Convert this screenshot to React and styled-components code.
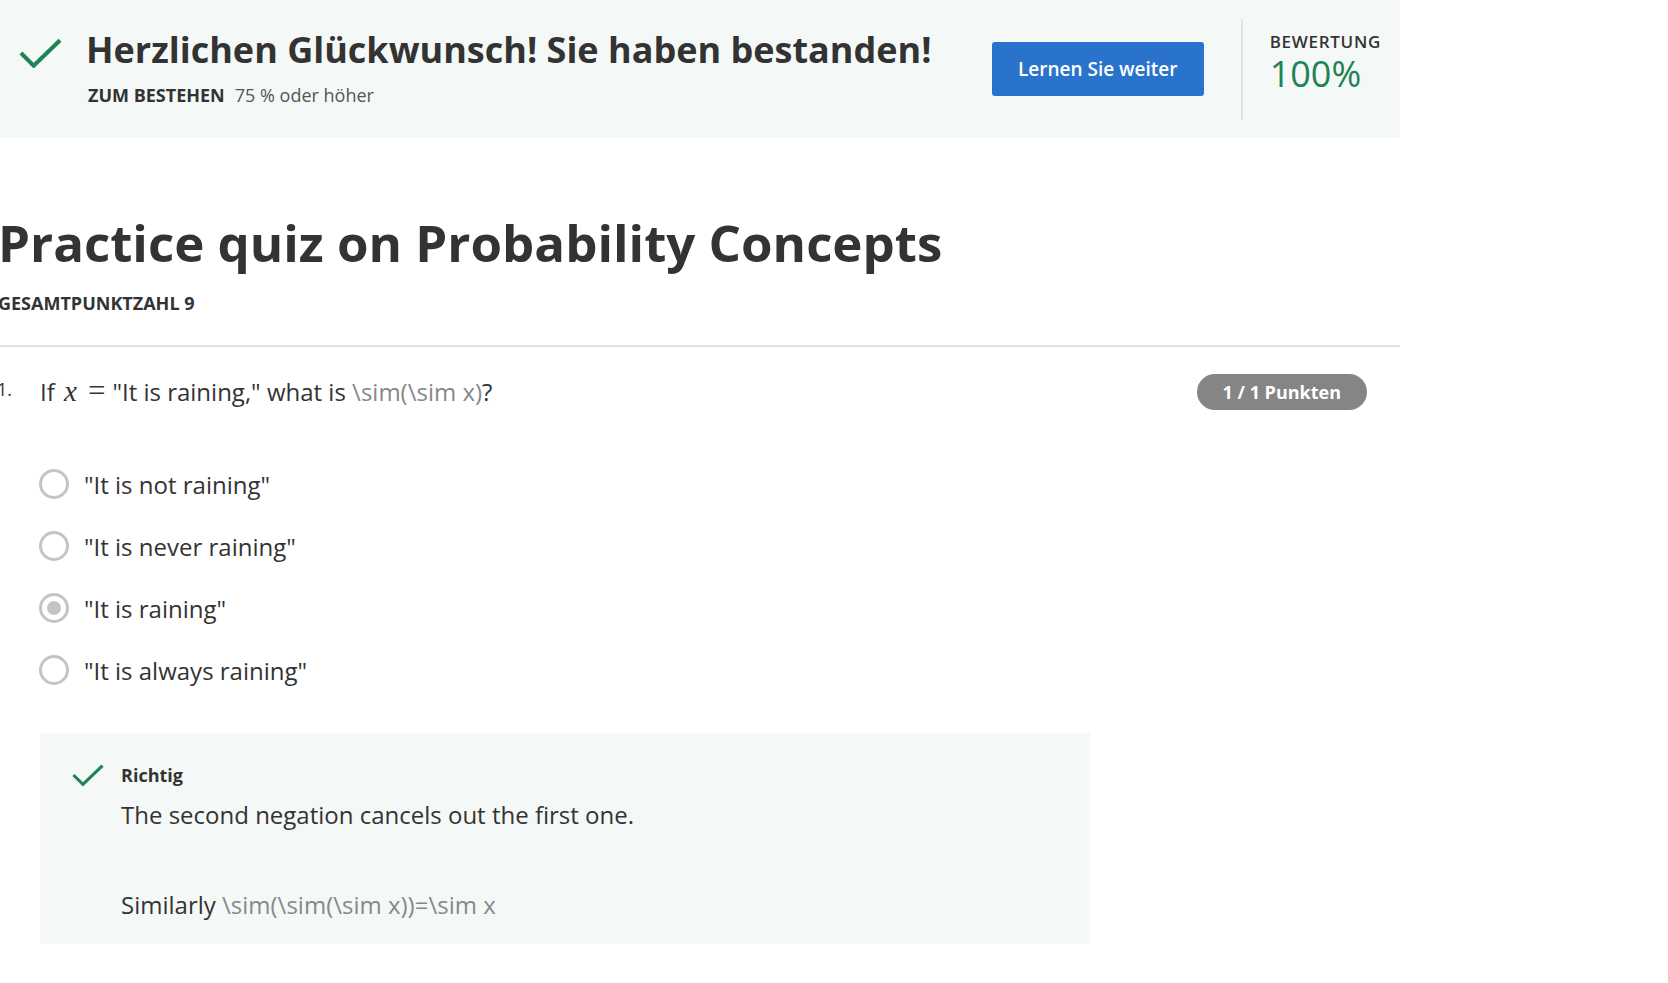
import React from "react";
import styled, { createGlobalStyle } from "styled-components";

const GlobalStyle = createGlobalStyle`
  html, body { margin: 0; padding: 0; background: #ffffff; }
  body {
    font-family: "Open Sans", "Noto Sans", sans-serif;
    color: #333333;
  }
`;

const Page = styled.div`
  width: 1400px;
`;

const Banner = styled.section`
  display: flex;
  align-items: center;
  height: 138px;
  background: #f4f9f7;
  padding: 0 19px 0 19px;
  box-sizing: border-box;
`;

const BannerMain = styled.div`
  display: flex;
  align-items: flex-start;
  margin-top: -3px;
`;

const CheckSvg = styled.svg`
  flex: none;
  width: ${(p) => p.$w}px;
  height: ${(p) => p.$h}px;
  margin-top: ${(p) => p.$top || 0}px;
`;

const BannerText = styled.div`
  display: flex;
  flex-direction: column;
  margin-left: 24px;
`;

const BannerTitle = styled.h2`
  margin: 0;
  font-size: 36px;
  font-weight: 700;
  line-height: 44px;
  color: #333;
`;

const PassRow = styled.div`
  display: flex;
  align-items: baseline;
  gap: 10px;
  margin-top: 11px;
  margin-left: 2px;
  font-size: 18px;
  line-height: 24px;
`;

const PassLabel = styled.span`
  font-weight: 700;
  text-transform: uppercase;
`;

const PassValue = styled.span`
  font-weight: 400;
  color: #555;
`;

const PrimaryButton = styled.button`
  margin-left: auto;
  width: 212px;
  height: 54px;
  border: none;
  border-radius: 3px;
  background: #2a73cc;
  color: #ffffff;
  font-family: inherit;
  font-size: 19px;
  font-weight: 600;
  cursor: pointer;
`;

const VDivider = styled.div`
  width: 2px;
  height: 101px;
  background: #dfe3e1;
  margin-left: 37px;
`;

const Grade = styled.div`
  display: flex;
  flex-direction: column;
  margin-left: 27px;
  margin-top: -12px;
`;

const GradeLabel = styled.span`
  font-size: 17px;
  font-weight: 600;
  letter-spacing: 0.7px;
  line-height: 22px;
  color: #333;
`;

const GradeValue = styled.span`
  font-size: 36px;
  font-weight: 400;
  line-height: 42px;
  color: #1f8354;
`;

const Main = styled.main`
  padding-top: 72px;
`;

const Title = styled.h1`
  margin: 0 0 0 -2px;
  font-size: 51px;
  font-weight: 700;
  line-height: 64px;
  color: #333;
`;

const TotalPoints = styled.div`
  margin-top: 18px;
  font-size: 18px;
  font-weight: 700;
  line-height: 22px;
  margin-left: -2px;
  text-transform: uppercase;
`;

const Rule = styled.hr`
  margin: 31px 0 0 0;
  border: none;
  height: 2px;
  background: #e1e1e1;
`;

const QuestionRow = styled.div`
  display: flex;
  align-items: center;
  margin-top: 27px;
  padding-right: 33px;
`;

const QNumber = styled.span`
  width: 43px;
  flex: none;
  font-size: 18px;
  margin-left: -3px;
  margin-top: -6px;
`;

const QText = styled.div`
  font-size: 24px;
  line-height: 32px;
  flex: 1;
`;

const MathVar = styled.span`
  font-family: "Liberation Serif", "DejaVu Serif", serif;
  font-style: italic;
  font-size: 29px;
  line-height: 0;
  margin-left: 3px;
`;

const MathOp = styled.span`
  font-family: "Liberation Serif", "DejaVu Serif", serif;
  font-size: 31px;
  line-height: 0;
  margin: 0 7px 0 11px;
`;

const RawMath = styled.span`
  color: #888888;
`;

const Badge = styled.span`
  display: inline-flex;
  align-items: center;
  justify-content: center;
  height: 36px;
  padding: 0 26px;
  border-radius: 18px;
  background: #858585;
  color: #ffffff;
  font-size: 18px;
  font-weight: 700;
`;

const Options = styled.div`
  display: flex;
  flex-direction: column;
  margin-top: 43px;
  padding-left: 39px;
`;

const Option = styled.label`
  display: flex;
  align-items: center;
  height: 62px;
  font-size: 24px;
  color: #333;
`;

const Radio = styled.span`
  flex: none;
  width: 30px;
  height: 30px;
  box-sizing: border-box;
  border-radius: 50%;
  border: 3px solid #c4c4c4;
  background: #fff;
  margin-right: 15px;
  display: flex;
  align-items: center;
  justify-content: center;
  &::after {
    content: "";
    display: ${(p) => (p.$checked ? "block" : "none")};
    width: 14px;
    height: 14px;
    border-radius: 50%;
    background: #c4c4c4;
  }
`;

const Feedback = styled.div`
  display: flex;
  align-items: flex-start;
  margin: 32px 0 0 40px;
  width: 1050px;
  height: 211px;
  box-sizing: border-box;
  background: #f4f9f7;
  padding: 30px 0 0 32px;
`;

const FeedbackBody = styled.div`
  display: flex;
  flex-direction: column;
  margin-left: 17px;
`;

const FeedbackLabel = styled.div`
  font-size: 18px;
  font-weight: 700;
  line-height: 24px;
`;

const FeedbackText = styled.p`
  margin: ${(p) => p.$top}px 0 0 0;
  font-size: 24px;
  line-height: 32px;
  color: #333;
`;

function Check({ w, h, top }) {
  return (
    <CheckSvg $w={w} $h={h} $top={top} viewBox="0 0 44 30">
      <path d="M2 15 L15 28 L42 2" fill="none" stroke="#1f8354" strokeWidth="4.2" />
    </CheckSvg>
  );
}

const options = [
  { text: '"It is not raining"', checked: false },
  { text: '"It is never raining"', checked: false },
  { text: '"It is raining"', checked: true },
  { text: '"It is always raining"', checked: false },
];

export default function App() {
  return (
    <Page>
      <GlobalStyle />
      <Banner>
        <BannerMain>
          <Check w={43} h={30} top={10} />
          <BannerText>
            <BannerTitle>Herzlichen Glückwunsch! Sie haben bestanden!</BannerTitle>
            <PassRow>
              <PassLabel>Zum Bestehen</PassLabel>
              <PassValue>75 % oder höher</PassValue>
            </PassRow>
          </BannerText>
        </BannerMain>
        <PrimaryButton>Lernen Sie weiter</PrimaryButton>
        <VDivider />
        <Grade>
          <GradeLabel>BEWERTUNG</GradeLabel>
          <GradeValue>100%</GradeValue>
        </Grade>
      </Banner>
      <Main>
        <Title>Practice quiz on Probability Concepts</Title>
        <TotalPoints>Gesamtpunktzahl 9</TotalPoints>
        <Rule />
        <QuestionRow>
          <QNumber>1.</QNumber>
          <QText>
            If <MathVar>x</MathVar>
            <MathOp>=</MathOp>"It is raining," what is <RawMath>\sim(\sim x)</RawMath>?
          </QText>
          <Badge>1 / 1 Punkten</Badge>
        </QuestionRow>
        <Options>
          {options.map((o) => (
            <Option key={o.text}>
              <Radio $checked={o.checked} />
              {o.text}
            </Option>
          ))}
        </Options>
        <Feedback>
          <Check w={32} h={24} top={0} />
          <FeedbackBody>
            <FeedbackLabel>Richtig</FeedbackLabel>
            <FeedbackText $top={12}>The second negation cancels out the first one.</FeedbackText>
            <FeedbackText $top={58}>
              Similarly <RawMath>\sim(\sim(\sim x))=\sim x</RawMath>
            </FeedbackText>
          </FeedbackBody>
        </Feedback>
      </Main>
    </Page>
  );
}
